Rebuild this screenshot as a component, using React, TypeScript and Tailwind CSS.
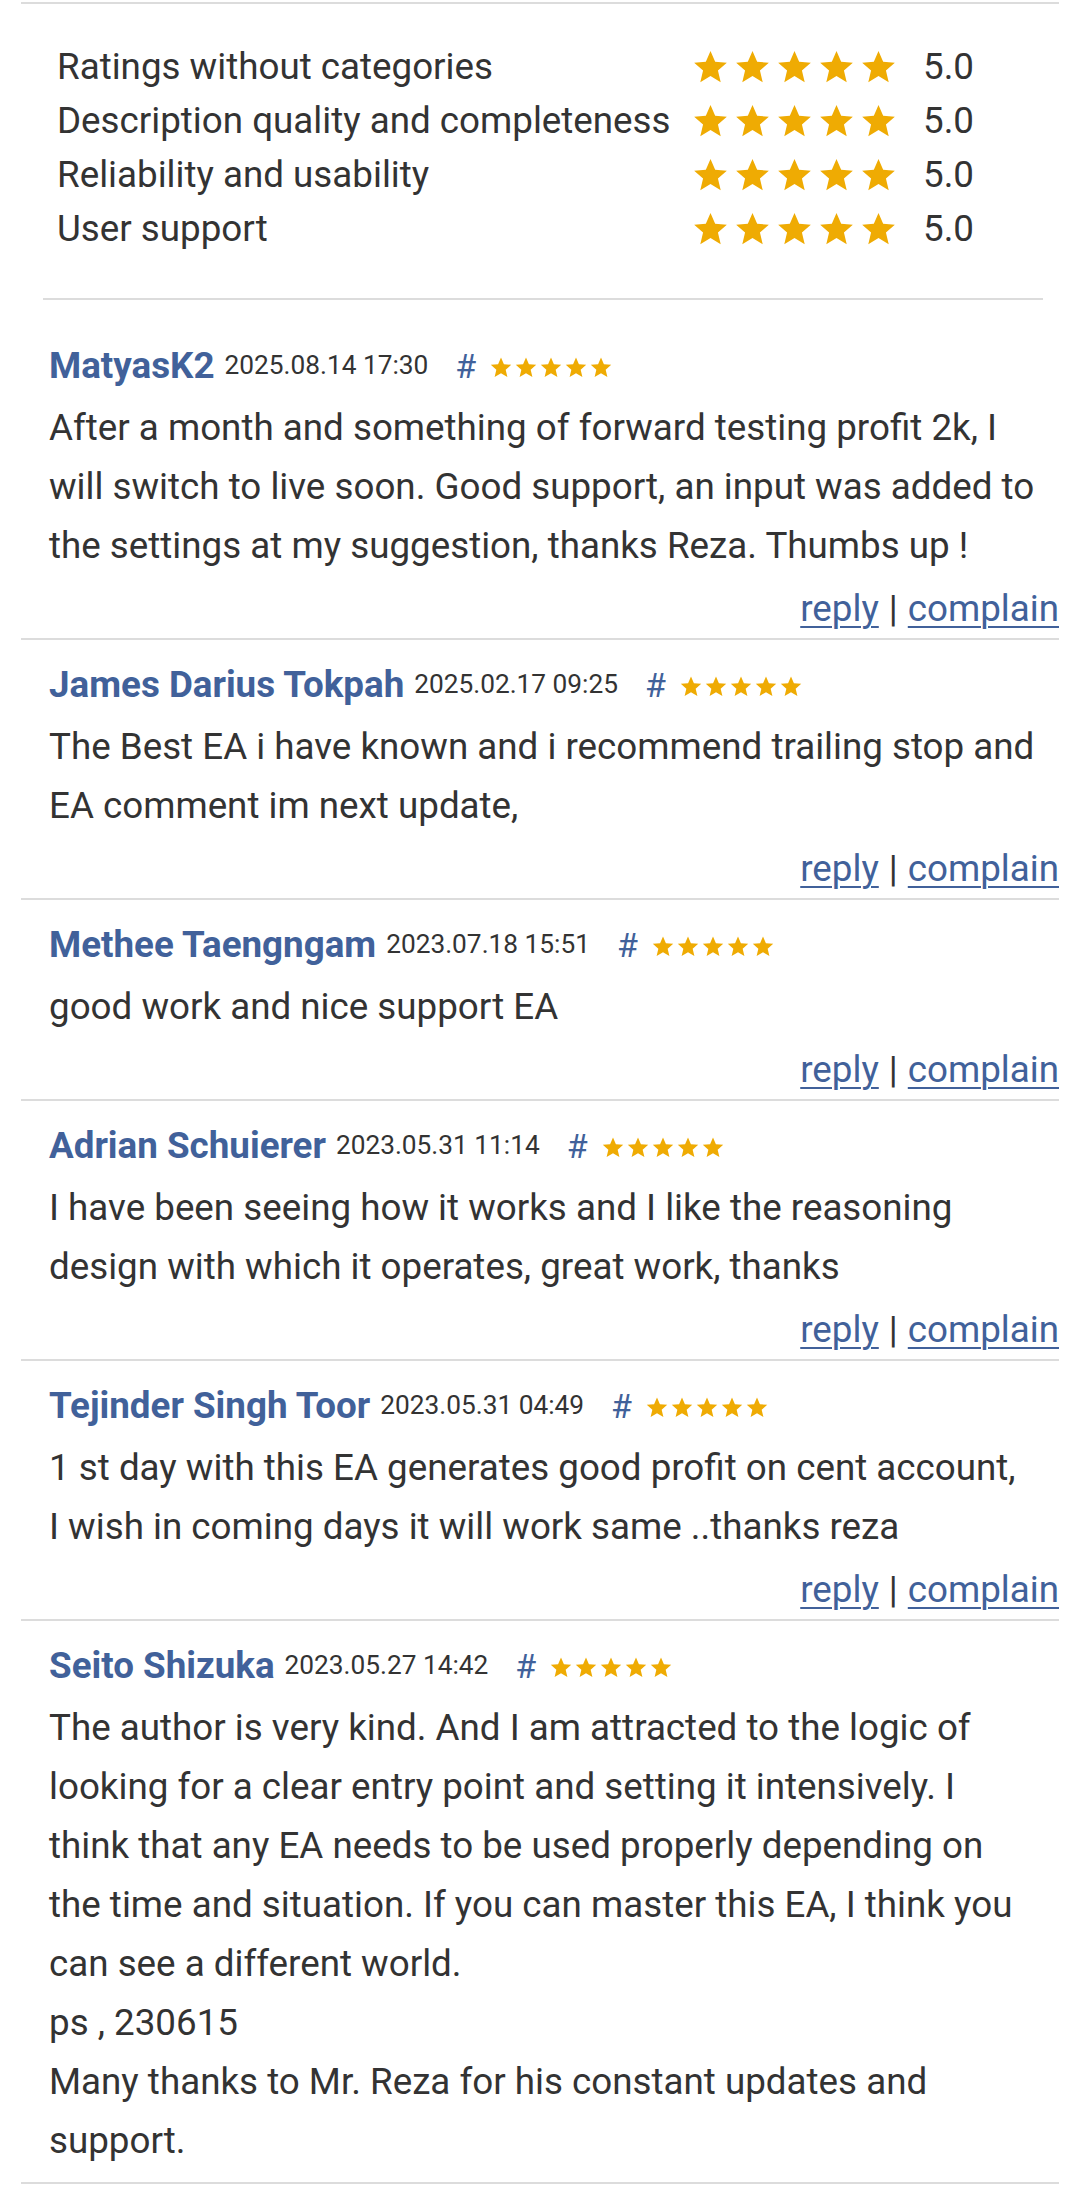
import React from 'react';

const ratings = [
  { label: 'Ratings without categories', value: '5.0' },
  { label: 'Description quality and completeness', value: '5.0' },
  { label: 'Reliability and usability', value: '5.0' },
  { label: 'User support', value: '5.0' },
];

interface Review {
  name: string;
  date: string;
  lines: string[];
  actions?: boolean;
}

const reviews: Review[] = [
  {
    name: 'MatyasK2',
    date: '2025.08.14 17:30',
    lines: [
      'After a month and something of forward testing profit 2k, I will switch to live soon. Good support, an input was added to the settings at my suggestion, thanks Reza. Thumbs up !',
    ],
    actions: true,
  },
  {
    name: 'James Darius Tokpah',
    date: '2025.02.17 09:25',
    lines: ['The Best EA i have known and i recommend trailing stop and EA comment im next update,'],
    actions: true,
  },
  {
    name: 'Methee Taengngam',
    date: '2023.07.18 15:51',
    lines: ['good work and nice support EA'],
    actions: true,
  },
  {
    name: 'Adrian Schuierer',
    date: '2023.05.31 11:14',
    lines: ['I have been seeing how it works and I like the reasoning design with which it operates, great work, thanks'],
    actions: true,
  },
  {
    name: 'Tejinder Singh Toor',
    date: '2023.05.31 04:49',
    lines: ['1 st day with this EA generates good profit on cent account, I\u00a0wish in coming days it will work same ..thanks reza'],
    actions: true,
  },
  {
    name: 'Seito Shizuka',
    date: '2023.05.27 14:42',
    lines: [
      'The author is very kind. And I am attracted to the logic of looking for a clear entry point and setting it intensively. I think that any EA needs to be used properly depending on the time and situation. If you can master this EA, I think you can see a different world.',
      'ps , 230615',
      'Many thanks to Mr. Reza for his constant updates and support.',
    ],
    actions: false,
  },
];

const Star: React.FC<{ className: string }> = ({ className }) => (
  <svg viewBox="0 0 24 23" className={className} aria-hidden="true">
    <polygon
      points="12,0.6 15.2,7.9 23.2,8.6 17.1,13.9 19,21.9 12,17.7 5,21.9 6.9,13.9 0.8,8.6 8.8,7.9"
      fill="#efab03"
    />
  </svg>
);

const Stars: React.FC<{ size: 'lg' | 'sm' }> = ({ size }) => (
  <div className={size === 'lg' ? 'flex gap-[7px]' : 'flex gap-[3px]'}>
    {[0, 1, 2, 3, 4].map((i) => (
      <Star key={i} className={size === 'lg' ? 'w-[35px] h-[34px]' : 'w-[22px] h-[21px]'} />
    ))}
  </div>
);

const ReviewItem: React.FC<{ review: Review; last: boolean }> = ({ review, last }) => (
  <div className={last ? 'pt-[13px] pl-[28px] pb-[12px] border-b-2 border-[#dcdcdc]' : 'pt-[13px] pl-[28px] border-b-2 border-[#dcdcdc]'}>
    <div className="h-[64px] flex items-center whitespace-nowrap">
      <span className="text-[36.75px] font-bold text-[#41619a]">{review.name}</span>
      <span className="ml-[10px] text-[26.25px] text-[#333]">{review.date}</span>
      <span className="ml-[27px] text-[34px] text-[#41619a] leading-none">#</span>
      <span className="ml-[14px] mt-[2px]">
        <Stars size="sm" />
      </span>
    </div>
    <div className="pr-[21px] text-[36.75px] leading-[59px] text-[#333]">
      {review.lines.map((line, i) => (
        <p key={i}>{line}</p>
      ))}
    </div>
    {review.actions && (
      <div className="mt-[4px] h-[59px] flex items-center justify-end text-[36.75px] text-[#333]">
        <a href="#" className="text-[#41619a] underline underline-offset-[5px] decoration-2">reply</a>
        <span className="mx-[10px]">|</span>
        <a href="#" className="text-[#41619a] underline underline-offset-[5px] decoration-2">complain</a>
      </div>
    )}
  </div>
);

const App: React.FC = () => {
  return (
    <div className="w-[1080px] min-h-[2185px] bg-white px-[21px] pt-[2px]" style={{ fontFamily: 'Roboto, "Noto Sans", sans-serif' }}>
      <div className="border-t-2 border-[#dcdcdc] pt-[36px] pl-[36px]">
        {ratings.map((r) => (
          <div key={r.label} className="flex items-center h-[54px] text-[36.75px] text-[#333]">
            <div className="w-[636px] whitespace-nowrap">{r.label}</div>
            <div className="w-[230px]">
              <Stars size="lg" />
            </div>
            <div>{r.value}</div>
          </div>
        ))}
      </div>
      <div className="mt-[42px] ml-[22px] mr-[16px] h-[2px] bg-[#dcdcdc]" />
      <div className="mt-[21px]">
        {reviews.map((rv, i) => (
          <ReviewItem key={rv.name} review={rv} last={i === reviews.length - 1} />
        ))}
      </div>
    </div>
  );
};

export default App;
